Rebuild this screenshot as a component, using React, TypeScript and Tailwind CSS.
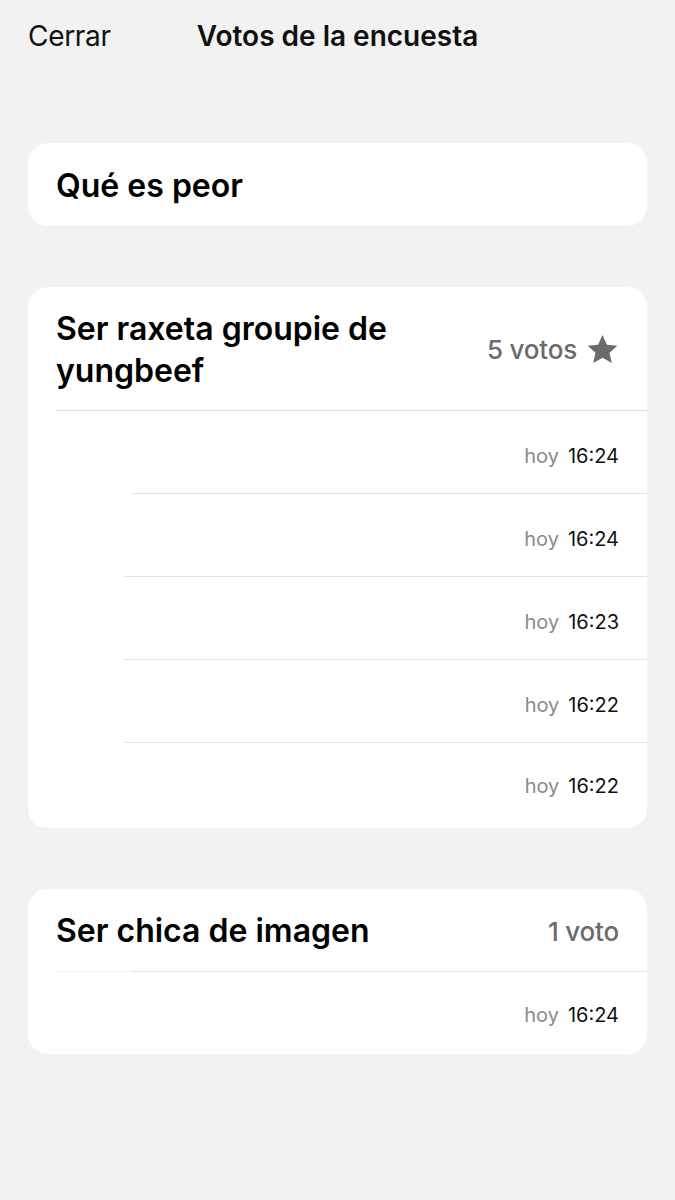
import React from "react";

const font = { fontFamily: "Inter, 'Noto Sans', 'Liberation Sans', sans-serif" };

function Star() {
  return (
    <svg width="33" height="31" viewBox="0 0 24 23" className="shrink-0">
      <path
        d="M12 0.8l3.3 7.1 7.7 0.8-5.8 5.2 1.7 7.6L12 17.6l-6.9 3.9 1.7-7.6L1 8.7l7.7-0.8z"
        fill="#6b6b6b"
      />
    </svg>
  );
}

function Row({ time, inset, last }: { time: string; inset: string; last?: boolean }) {
  return (
    <div className={"flex " + (last ? "h-[85px]" : "h-[83px]")}>
      <div className={"flex-1 flex " + inset}>
        <div
          className={
            "flex-1 flex items-center justify-end pr-[28px] " +
            (last ? "pt-[1px]" : "pt-[8px] border-b border-[#e2e2e2]")
          }
        >
          <span className="text-[20px] text-[#8a8a8a] mr-[9px]">hoy</span>
          <span className="text-[20px] text-[#111]">{time}</span>
        </div>
      </div>
    </div>
  );
}

export default function App() {
  return (
    <div className="min-h-[1200px] bg-[#f2f2f2] text-black" style={font}>
      <div className="relative h-[72px] flex items-center px-[28px]">
        <span className="text-[28px] text-[#111] tracking-[-0.3px]">Cerrar</span>
        <span className="absolute left-0 right-0 text-center text-[28px] font-semibold text-[#111] pointer-events-none">
          Votos de la encuesta
        </span>
      </div>

      <div className="px-[28px] pt-[71px]">
        <div className="bg-white rounded-[20px] h-[83px] flex items-center px-[28px] pt-[3px]">
          <span className="text-[32px] font-semibold">Qué es peor</span>
        </div>

        <div className="mt-[61px] bg-white rounded-[20px] overflow-hidden">
          <div className="ml-[28px] border-b border-[#dedede] flex items-center pr-[28px] h-[124px] pt-[2px]">
            <div className="flex-1 text-[32px] font-semibold leading-[42px] max-w-[400px]">
              Ser raxeta groupie de yungbeef
            </div>
            <div className="ml-auto flex items-center gap-[9px] pl-4">
              <span className="text-[26px] font-medium text-[#6b6b6b] tracking-[-0.2px]">5 votos</span>
              <Star />
            </div>
          </div>
          <Row time="16:24" inset="ml-[104px]" />
          <Row time="16:24" inset="ml-[96px]" />
          <Row time="16:23" inset="ml-[96px]" />
          <Row time="16:22" inset="ml-[96px]" />
          <Row time="16:22" inset="ml-[96px]" last />
        </div>

        <div className="mt-[61px] bg-white rounded-[20px] overflow-hidden">
          <div className="relative ml-[28px] flex items-center pr-[28px] h-[82px] pt-[2px]">
            <span className="flex-1 text-[32px] font-semibold">Ser chica de imagen</span>
            <span className="text-[26px] font-medium text-[#6b6b6b] tracking-[-0.2px]">1 voto</span>
          </div>
          <div className="flex h-px">
            <div className="ml-[28px] w-[76px] bg-[#f4f4f4]" />
            <div className="flex-1 bg-[#e2e2e2]" />
          </div>
          <div className="h-[82px] flex items-center justify-end pr-[28px] pt-[4px]">
            <span className="text-[20px] text-[#8a8a8a] mr-[9px]">hoy</span>
            <span className="text-[20px] text-[#111]">16:24</span>
          </div>
        </div>
      </div>
    </div>
  );
}
